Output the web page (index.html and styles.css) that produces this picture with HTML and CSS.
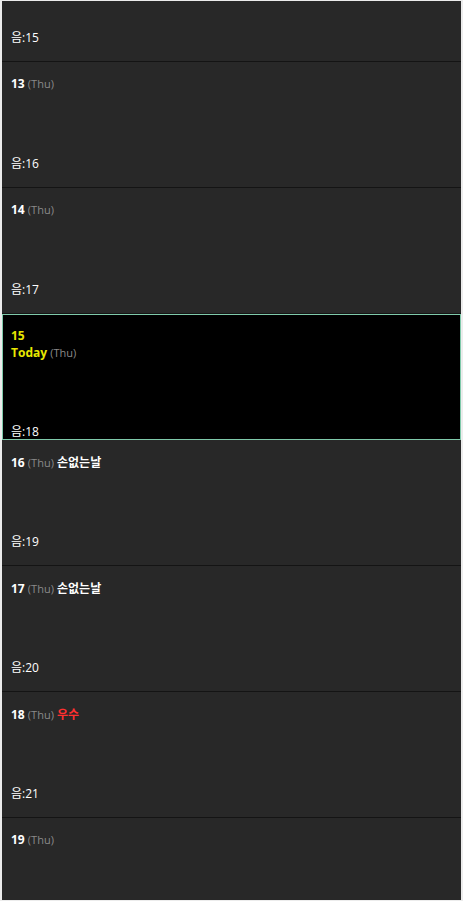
FILE: index.html
```html
<!DOCTYPE html>
<html lang="ko">
<head>
<meta charset="utf-8">
<title>Calendar</title>
<link rel="stylesheet" href="styles.css">
</head>
<body>
<div class="frame">
  <div class="list">
    <div class="day">
      <div class="date"></div>
      <div class="lunar">음:15</div>
    </div>
    <div class="day">
      <div class="date"><b class="num">13</b> <span class="dow">(Thu)</span></div>
      <div class="lunar">음:16</div>
    </div>
    <div class="day">
      <div class="date"><b class="num">14</b> <span class="dow">(Thu)</span></div>
      <div class="lunar">음:17</div>
    </div>
    <div class="day today">
      <div class="date"><b class="num">15</b></div>
      <div class="date second"><b class="today-label">Today</b> <span class="dow">(Thu)</span></div>
      <div class="lunar">음:18</div>
    </div>
    <div class="day">
      <div class="date"><b class="num">16</b> <span class="dow">(Thu)</span> <span class="event">손없는날</span></div>
      <div class="lunar">음:19</div>
    </div>
    <div class="day">
      <div class="date"><b class="num">17</b> <span class="dow">(Thu)</span> <span class="event">손없는날</span></div>
      <div class="lunar">음:20</div>
    </div>
    <div class="day">
      <div class="date"><b class="num">18</b> <span class="dow">(Thu)</span> <span class="event red">우수</span></div>
      <div class="lunar">음:21</div>
    </div>
    <div class="day">
      <div class="date"><b class="num">19</b> <span class="dow">(Thu)</span></div>
    </div>
  </div>
</div>
</body>
</html>
```
FILE: styles.css
```css
html, body {
  margin: 0;
  padding: 0;
}
body {
  background: #ececec;
  font-family: "Open Sans", "Noto Sans CJK KR", sans-serif;
  font-size: 12px;
  color: #fff;
}
.frame {
  margin: 1px 2px 0 2px;
  width: 459px;
  height: 899px;
  overflow: hidden;
  background: #282828;
}
.list {
  margin-top: -65px;
}
.day {
  box-sizing: border-box;
  height: 126px;
  padding: 14px 9px 0 9px;
  background: #282828;
  border-bottom: 1px solid #141414;
}
.date {
  line-height: 16px;
  height: 16px;
  white-space: nowrap;
}
.num {
  font-weight: 700;
  font-size: 12px;
}
.dow {
  color: #8a8a8a;
  font-size: 11px;
}
.event {
  font-weight: 700;
  font-family: "Noto Sans CJK KR", "Open Sans", sans-serif;
}
.event.red {
  color: #ff3030;
}
.lunar {
  margin-top: 64px;
  line-height: 16px;
}
.day.today {
  background: #000;
  border: 1px solid #7fc9aa;
  padding: 13px 8px 0 8px;
}
.today .num,
.today .today-label {
  color: #e8e800;
}
.today .date.second {
  margin-top: 1px;
}
.today .lunar {
  margin-top: 63px;
}
```
